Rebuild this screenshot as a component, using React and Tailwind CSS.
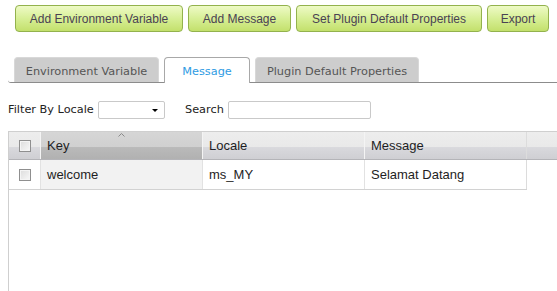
import React from 'react';

const buttons = [
    { label: 'Add Environment Variable', w: 'w-[168px]' },
    { label: 'Add Message', w: 'w-[103px]' },
    { label: 'Set Plugin Default Properties', w: 'w-[186px]' },
    { label: 'Export', w: 'w-[62px]' },
];
const tabs = [
    { label: 'Environment Variable', w: 'w-[145px]' },
    { label: 'Message', w: 'w-[86px]' },
    { label: 'Plugin Default Properties', w: 'w-[164px]' },
];

function Checkbox() {
    return (
        <div className="w-[12px] h-[12px] border border-[#8f8f8f] bg-[linear-gradient(135deg,#dcdcdc,#f8f8f8)] shadow-[inset_0_0_0_1px_#f4f4f4]" />
    );
}

export default function App() {
    const active = 'Message';

    return (
        <div className="w-[557px] h-[291px] overflow-hidden bg-white flex flex-col font-['Liberation_Sans',Arial,sans-serif]">
            {/* action buttons */}
            <div className="flex gap-[5px] pl-[15px] pt-[5px]">
                {buttons.map(b => (
                    <button
                        key={b.label}
                        className={`${b.w} h-[27px] rounded-[4px] border border-[#93b24d] bg-[linear-gradient(#eefac6,#d7ef96_50%,#c3e06c)] text-[12px] text-[#4a4253] whitespace-nowrap`}
                    >
                        {b.label}
                    </button>
                ))}
            </div>

            {/* tabs */}
            <div className="mt-[25px] ml-[8px] flex gap-[5px] pl-[6px] border-b border-[#8c8c8c] rounded-bl-[3px] font-['DejaVu_Sans',Verdana,sans-serif] text-[11.3px]">
                {tabs.map(t => (
                    <div
                        key={t.label}
                        className={`${t.w} text-center whitespace-nowrap ` + (t.label === active
                            ? 'h-[26px] -mb-px pt-[6px] rounded-t-[4px] border border-b-0 border-[#a8a8a8] bg-white text-[#2e9be3]'
                            : 'h-[25px] pt-[6px] rounded-t-[4px] border border-b-0 border-[#d8d8d8] bg-[#cdcdcd] text-[#555555]')}
                    >
                        {t.label}
                    </div>
                ))}
            </div>

            {/* filter */}
            <div className="mt-[18px] pl-[8px] flex items-center h-[18px] font-['DejaVu_Sans',Verdana,sans-serif] text-[11.3px] text-[#222]">
                <span className="w-[90px] whitespace-nowrap">Filter By Locale</span>
                <div className="w-[67px] h-[18px] border border-[#c9c9c9] rounded-[2px] flex items-center justify-end pr-[6px]">
                    <div className="w-0 h-0 border-l-[3px] border-r-[3px] border-t-[3px] border-l-transparent border-r-transparent border-t-black" />
                </div>
                <span className="ml-[20px] w-[43px]">Search</span>
                <div className="w-[143px] h-[18px] border border-[#c9c9c9] rounded-[2px]" />
            </div>

            {/* grid */}
            <div className="mt-[12px] ml-[8px] flex-1 border-l border-t border-[#cfcfcf] text-[13px] text-[#1e1e24]">
                <div className="flex h-[28px] border-b border-[#b4b4b8] bg-[linear-gradient(#ededed,#e9e9e9_55%,#d9d9dd_56%,#cfcfd3)]">
                    <div className="w-[32px] flex items-center justify-center border-r border-[#f4f4f4]">
                        <Checkbox />
                    </div>
                    <div className="relative w-[162px] flex items-center pl-[6px] border-r border-[#f4f4f4] bg-[linear-gradient(#d6d6d6,#d0d0d0_55%,#bababa_56%,#b1b1b1)]">
                        <svg className="absolute left-[77px] top-[1px]" width="7" height="4" viewBox="0 0 7 4">
                            <path d="M0.5 3.5 L3.5 0.5 L6.5 3.5" fill="none" stroke="#8a8a8a" strokeWidth="1" />
                        </svg>
                        Key
                    </div>
                    <div className="w-[162px] flex items-center pl-[6px] border-r border-[#f4f4f4]">Locale</div>
                    <div className="w-[162px] flex items-center pl-[6px] border-r border-[#dcdcdc]">Message</div>
                    <div className="flex-1" />
                </div>
                <div className="flex h-[30px]">
                    <div className="flex w-[518px] border-b border-[#d2d2d2]">
                        <div className="w-[32px] flex items-center justify-center border-r border-[#e2e2e2]">
                            <Checkbox />
                        </div>
                        <div className="w-[162px] flex items-center pl-[6px] border-r border-[#e2e2e2] bg-[#f2f2f2]">welcome</div>
                        <div className="w-[162px] flex items-center pl-[6px] border-r border-[#e2e2e2]">ms_MY</div>
                        <div className="w-[162px] flex items-center pl-[6px] border-r border-[#dcdcdc]">Selamat Datang</div>
                    </div>
                </div>
            </div>
        </div>
    );
}
